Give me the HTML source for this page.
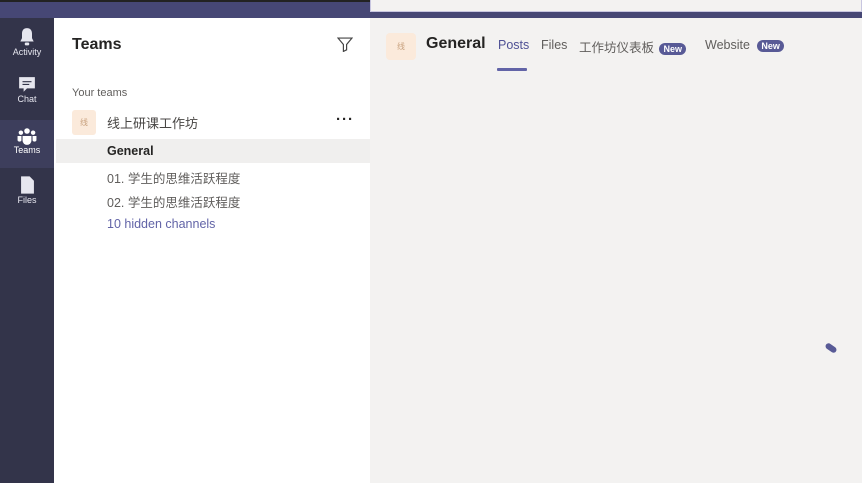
<!DOCTYPE html>
<html><head><meta charset="utf-8"><style>
*{margin:0;padding:0;box-sizing:border-box}
body{width:862px;height:483px;overflow:hidden;background:#f3f2f1;font-family:"Liberation Sans","Noto Sans CJK SC",sans-serif;position:relative}
.top{position:absolute;left:0;top:0;width:862px;height:18px;background:#464775;border-top:2px solid #222}
.search{position:absolute;left:370px;top:0;width:492px;height:12px;background:#f3f2f1;border:1px solid #c8c6e0;border-top:none}
.rail{position:absolute;left:0;top:18px;width:54px;height:465px;background:#33344a}
.ri{position:absolute;left:0;width:54px;text-align:center;color:#e6e6ef;font-size:9px}
.ri.sel{background:#3d3e5c}
.panel{position:absolute;left:54px;top:18px;width:316px;height:465px;background:#fff}
.abs{position:absolute}
.badge{display:inline-block;background:#585a96;color:#fff;font-size:9px;font-weight:bold;border-radius:6px;padding:1px 4px;vertical-align:middle}
</style></head><body>
<div class="top"></div><div class="search"></div>
<div class="rail">
 <div class="ri" style="top:8px;height:40px">
  <svg width="18" height="20" viewBox="0 0 16 18" style="margin-top:1px"><path d="M8 1C5 1 3.5 3 3.5 6v4L2 13h12l-1.5-3V6C12.5 3 11 1 8 1z" fill="#e6e6ef"/><rect x="6" y="14" width="4" height="2.5" rx="1" fill="#e6e6ef"/></svg><div style="margin-top:-2px">Activity</div></div>
 <div class="ri" style="top:58px;height:40px">
  <svg width="18" height="18" viewBox="0 0 16 16"><path d="M1 1h14v10H8l-3 3v-3H1z" fill="#e6e6ef"/><path d="M4 5h8M4 7.5h6" stroke="#33344a" stroke-width="1"/></svg><div style="margin-top:-2px">Chat</div></div>
 <div class="ri sel" style="top:102px;height:48px;padding-top:7px">
  <svg width="20" height="18" viewBox="0 0 18 16"><circle cx="9" cy="3.5" r="2.5" fill="#fff"/><circle cx="3.5" cy="5" r="2" fill="#fff"/><circle cx="14.5" cy="5" r="2" fill="#fff"/><path d="M5 8h8v4a4 4 0 0 1-8 0z" fill="#fff"/><path d="M0.5 8h3.5v4a2 2 0 0 1-3.5 0zM14 8h3.5v4a2 2 0 0 1-3.5 0z" fill="#fff"/></svg><div style="color:#fff;margin-top:-2px">Teams</div></div>
 <div class="ri" style="top:157px;height:40px">
  <svg width="15" height="20" viewBox="0 0 14 18"><path d="M1 1h8l4 4v12H1z" fill="#e6e6ef"/></svg><div style="margin-top:-2px">Files</div></div>
</div>
<div class="panel">
 <div class="abs" style="left:18px;top:18px;font-size:16px;font-weight:bold;color:#252423">Teams</div>
 <svg class="abs" style="left:283px;top:19px" width="16" height="15" viewBox="0 0 15 14"><path d="M1 1h13L9 7v5l-3 1.5V7z" fill="none" stroke="#444" stroke-width="1.1"/></svg>
 <div class="abs" style="left:18px;top:69px;font-size:11px;color:#605e5c">Your teams</div>
 <div class="abs" style="left:18px;top:92px;width:24px;height:25px;background:#fbeadb;border-radius:3px;font-size:8px;color:#c9a27f;text-align:center;line-height:25px">线</div>
 <div class="abs" style="left:53px;top:95px;font-size:13px;color:#484644">线上研课工作坊</div>
 <div class="abs" style="left:282px;top:93px;font-size:15px;font-weight:bold;color:#252423;letter-spacing:1px">···</div>
 <div class="abs" style="left:2px;top:121px;width:314px;height:24px;background:#f0efee"></div>
 <div class="abs" style="left:53px;top:126px;font-size:12.5px;font-weight:bold;color:#252423">General</div>
 <div class="abs" style="left:53px;top:150px;font-size:12.5px;color:#605e5c">01. 学生的思维活跃程度</div>
 <div class="abs" style="left:53px;top:174px;font-size:12.5px;color:#605e5c">02. 学生的思维活跃程度</div>
 <div class="abs" style="left:53px;top:199px;font-size:12.5px;color:#6264a7">10 hidden channels</div>
</div>
<div class="abs" style="left:386px;top:33px;width:30px;height:27px;background:#fbeadb;border-radius:4px;font-size:8px;color:#c9a27f;text-align:center;line-height:27px">线</div>
<div class="abs" style="left:426px;top:35px;font-size:16px;font-weight:bold;color:#252423">General</div>
<div class="abs" style="left:498px;top:38px;font-size:12.5px;color:#4f5195">Posts</div>
<div class="abs" style="left:497px;top:68px;width:30px;height:3px;background:#6264a7;border-radius:1px"></div>
<div class="abs" style="left:541px;top:38px;font-size:12.5px;color:#605e5c">Files</div>
<div class="abs" style="left:579px;top:37px;font-size:12.5px;color:#605e5c">工作坊仪表板 <span class="badge" style="margin-left:2px">New</span></div>
<div class="abs" style="left:705px;top:38px;font-size:12.5px;color:#605e5c">Website <span class="badge" style="margin-left:4px">New</span></div>
<div class="abs" style="left:825px;top:345px;width:12px;height:6px;background:#585a96;border-radius:3px;transform:rotate(35deg)"></div>
</body></html>
